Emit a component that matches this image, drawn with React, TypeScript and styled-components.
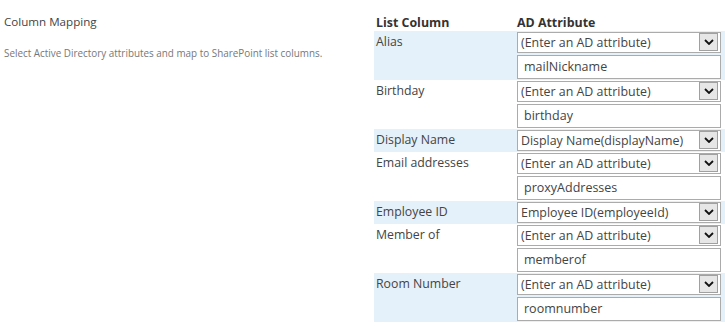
import React from "react";
import styled, { createGlobalStyle } from "styled-components";

const Global = createGlobalStyle`
  html, body { margin: 0; padding: 0; background: #fff; }
  body { font-family: "Open Sans", "Noto Sans", sans-serif; color: #444; }
`;

const Page = styled.div`
  display: flex;
  width: 725px;
  height: 326px;
  overflow: hidden;
`;

const Intro = styled.div`
  width: 374px;
  padding: 14px 0 0 4px;
  box-sizing: border-box;
`;

const Title = styled.div`
  font-size: 11.6px;
  line-height: 16px;
  color: #444;
`;

const Description = styled.div`
  margin-top: 16px;
  font-size: 9.9px;
  line-height: 14px;
  color: #777;
`;

const Table = styled.div`
  width: 351px;
  padding-top: 14px;
`;

const Grid = styled.div`
  display: grid;
  grid-template-columns: 143px 208px;
`;

const HeaderCell = styled.div<{ $pad?: number }>`
  font-weight: 700;
  font-size: 12.4px;
  line-height: 17px;
  color: #333;
  padding-left: ${(p) => p.$pad ?? 0}px;
`;

const Row = styled.div<{ $alt: boolean }>`
  grid-column: 1 / span 2;
  display: grid;
  grid-template-columns: 143px 208px;
  background: ${(p) => (p.$alt ? "#e5f1fa" : "transparent")};
  padding: 1px 0;
`;

const Label = styled.div`
  font-size: 12.3px;
  line-height: 17px;
  padding: 1px 0 0 2px;
  color: #444;
`;

const Controls = styled.div`
  display: flex;
  flex-direction: column;
  gap: 2px;
  width: 204px;
`;

const Select = styled.div`
  display: flex;
  align-items: stretch;
  height: 21px;
  box-sizing: border-box;
  border: 1px solid #ababab;
  background: #fff;
`;

const SelectText = styled.div`
  flex: 1;
  font-size: 12.4px;
  line-height: 19px;
  padding-left: 3px;
  color: #444;
  white-space: nowrap;
  overflow: hidden;
`;

const DropButton = styled.div`
  width: 19px;
  margin: 0 2px 1px 0;
  box-sizing: border-box;
  border: 1px solid #a0a0a0;
  background: #e6e6e6;
  display: flex;
  align-items: center;
  justify-content: center;
`;

const TextBox = styled.div`
  height: 24px;
  box-sizing: border-box;
  border: 1px solid #ababab;
  background: #fff;
  font-size: 12.5px;
  line-height: 22px;
  padding-left: 6px;
  color: #444;
`;

const Chevron = () => (
  <svg width="10" height="6" viewBox="0 0 10 6">
    <polyline points="1,1 5,5 9,1" fill="none" stroke="#111" strokeWidth="1.8" />
  </svg>
);

type Mapping = { label: string; value: string; text?: string; alt: boolean };

const rows: Mapping[] = [
  { label: "Alias", value: "(Enter an AD attribute)", text: "mailNickname", alt: true },
  { label: "Birthday", value: "(Enter an AD attribute)", text: "birthday", alt: false },
  { label: "Display Name", value: "Display Name(displayName)", alt: true },
  { label: "Email addresses", value: "(Enter an AD attribute)", text: "proxyAddresses", alt: false },
  { label: "Employee ID", value: "Employee ID(employeeId)", alt: true },
  { label: "Member of", value: "(Enter an AD attribute)", text: "memberof", alt: false },
  { label: "Room Number", value: "(Enter an AD attribute)", text: "roomnumber", alt: true },
];

export default function App() {
  return (
    <>
      <Global />
      <Page>
        <Intro>
          <Title>Column Mapping</Title>
          <Description>Select Active Directory attributes and map to SharePoint list columns.</Description>
        </Intro>
        <Table>
          <Grid>
            <HeaderCell $pad={2}>List Column</HeaderCell>
            <HeaderCell>AD Attribute</HeaderCell>
            {rows.map((r) => (
              <Row key={r.label} $alt={r.alt}>
                <Label>{r.label}</Label>
                <Controls>
                  <Select>
                    <SelectText>{r.value}</SelectText>
                    <DropButton>
                      <Chevron />
                    </DropButton>
                  </Select>
                  {r.text !== undefined && <TextBox>{r.text}</TextBox>}
                </Controls>
              </Row>
            ))}
          </Grid>
        </Table>
      </Page>
    </>
  );
}
